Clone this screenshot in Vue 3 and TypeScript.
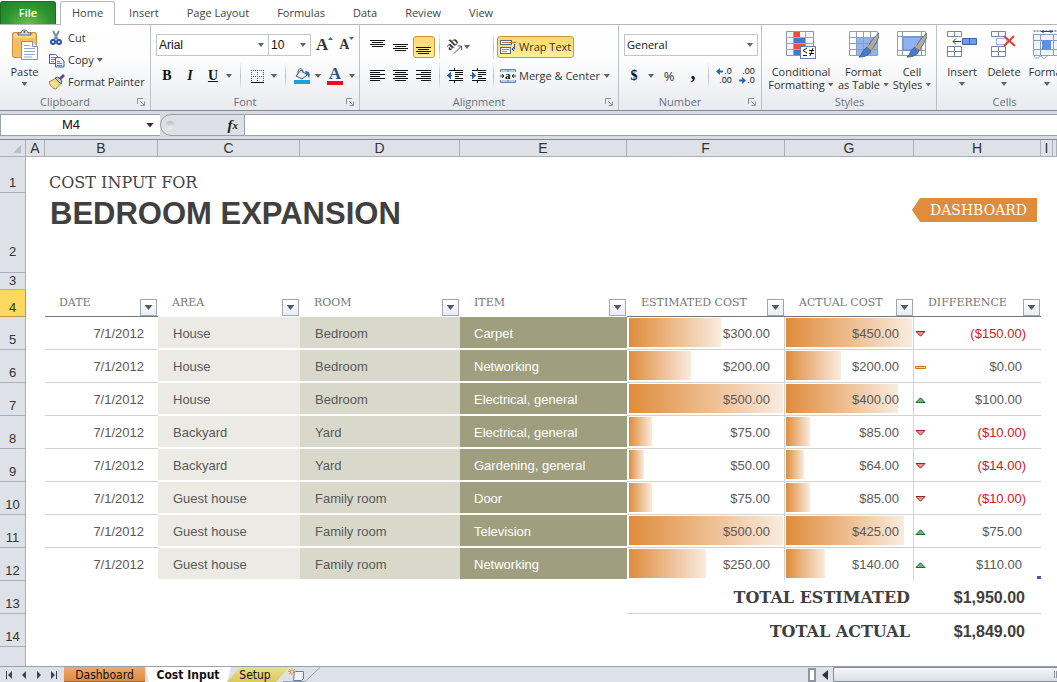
<script setup lang="ts">
import { ref } from 'vue'

interface CostRow {
  area: string
  room: string
  item: string
  estimated: number
  actual: number
}

const ribbonTabs = ['Home', 'Insert', 'Page Layout', 'Formulas', 'Data', 'Review', 'View']
const activeTab = ref('Home')

const columns = ['A', 'B', 'C', 'D', 'E', 'F', 'G', 'H', 'I', '']
const headings = [
  { key: 'date', label: 'DATE', ruled: true },
  { key: 'area', label: 'AREA', ruled: false },
  { key: 'room', label: 'ROOM', ruled: false },
  { key: 'item', label: 'ITEM', ruled: false },
  { key: 'estimated', label: 'ESTIMATED COST', ruled: true },
  { key: 'actual', label: 'ACTUAL COST', ruled: true },
  { key: 'difference', label: 'DIFFERENCE', ruled: true },
]

const rows: CostRow[] = [
  { area: 'House', room: 'Bedroom', item: 'Carpet', estimated: 300, actual: 450 },
  { area: 'House', room: 'Bedroom', item: 'Networking', estimated: 200, actual: 200 },
  { area: 'House', room: 'Bedroom', item: 'Electrical, general', estimated: 500, actual: 400 },
  { area: 'Backyard', room: 'Yard', item: 'Electrical, general', estimated: 75, actual: 85 },
  { area: 'Backyard', room: 'Yard', item: 'Gardening, general', estimated: 50, actual: 64 },
  { area: 'Guest house', room: 'Family room', item: 'Door', estimated: 75, actual: 85 },
  { area: 'Guest house', room: 'Family room', item: 'Television', estimated: 500, actual: 425 },
  { area: 'Guest house', room: 'Family room', item: 'Networking', estimated: 250, actual: 140 },
]

const maxEstimated = Math.max(...rows.map((r) => r.estimated))
const maxActual = Math.max(...rows.map((r) => r.actual))
const totalEstimated = rows.reduce((sum, r) => sum + r.estimated, 0)
const totalActual = rows.reduce((sum, r) => sum + r.actual, 0)

function money(value: number): string {
  const text = '$' + Math.abs(value).toLocaleString('en-US', { minimumFractionDigits: 2 })
  return value < 0 ? `(${text})` : text
}

function barWidth(value: number, max: number): string {
  return `${Math.round((value / max) * 100)}%`
}

const fontName = ref('Arial')
const fontSize = ref('10')
const numberFormat = ref('General')
const cellName = ref('M4')
const formula = ref('')
</script>

<template>
  <div class="excel">
    <nav class="tabs" aria-label="Ribbon tabs">
      <button type="button" class="file">File</button>
      <button
        v-for="tab in ribbonTabs"
        :key="tab"
        type="button"
        class="tab"
        :class="{ active: tab === activeTab }"
        @click="activeTab = tab"
      >{{ tab }}</button>
    </nav>

    <div class="ribbon">
      <section class="group clipboard">
        <div class="content">
          <button type="button" class="big paste">
            <svg width="30" height="32" viewBox="0 0 30 32">
              <rect x="2.5" y="3.5" width="24" height="25" rx="2" fill="#f2bf62" stroke="#c98f3a" />
              <rect x="4" y="5" width="21" height="4" fill="#f8d48d" />
              <path d="M8 6h13v-2h-3c0-4-7-4-7 0h-3z" fill="#d5d8dc" stroke="#686d74" />
              <circle cx="14.500" cy="3" r="1" fill="#555" />
              <path d="M11.500 12.500h11l5 5v13h-16z" fill="#fff" stroke="#7f93b5" />
              <path d="M22.500 12.500v5h5" fill="#dfe8f5" stroke="#7f93b5" />
              <path d="M14 16.500h6M14 19.500h11M14 22.500h11M14 25.500h11M14 28h8" stroke="#90a9cf" />
            </svg>
            <span>Paste</span>
            <i class="caret"></i>
          </button>
          <div class="stack">
            <button type="button">
              <svg width="16" height="16" viewBox="0 0 16 16" fill="none">
                <path d="M4 1l5 9M10 1l-5 9" stroke="#7b8da8" stroke-width="2" />
                <circle cx="4" cy="12" r="2" stroke="#2a56a5" stroke-width="2" />
                <circle cx="10" cy="12" r="2" stroke="#2a56a5" stroke-width="2" />
              </svg>
              Cut
            </button>
            <button type="button">
              <svg width="16" height="16" viewBox="0 0 16 16">
                <path d="M.5 2.500h6l3 3v6h-9z" fill="#fff" stroke="#3c65a6" />
                <path d="M2 5.500h4M2 7.500h4M2 9.500h3" stroke="#5b86c8" />
                <path d="M6.500 5.500h5l3.500 3.500v6h-8.500z" fill="#e8f1fc" stroke="#3c65a6" />
                <path d="M8 9.500h3M8 11.500h5M8 13.500h5" stroke="#5b86c8" />
              </svg>
              Copy <i class="caret"></i>
            </button>
            <button type="button">
              <svg width="16" height="16" viewBox="0 0 16 16">
                <path d="M0 8l7-4 5 5-5 6c-3 0-6-3-7-7z" fill="#f0d878" stroke="#a78a35" />
                <path d="M3 8l5 4M2 9l5 5" stroke="#fff5c5" />
                <path d="M6 4l3-1 4 4-1 3z" fill="#c2c8e0" stroke="#54577e" />
                <path d="M10 4l4-4 2 2-4 4z" fill="#5a4a78" />
              </svg>
              Format Painter
            </button>
          </div>
        </div>
        <h2>Clipboard</h2>
        <button type="button" class="launcher" aria-label="Clipboard options"><svg width="8" height="8" viewBox="0 0 8 8" fill="none" stroke="#8a919c"><path d="M.5 6V.5H6M3 3l4 4M7.500 3.500v4h-4" /></svg></button>
      </section>

      <section class="group font">
        <div class="content rows">
          <div class="line">
            <span class="pick family">
              <select v-model="fontName" aria-label="Font"><option>Arial</option></select>
              <i class="caret"></i>
            </span>
            <span class="pick size">
              <select v-model="fontSize" aria-label="Font size"><option>10</option></select>
              <i class="caret"></i>
            </span>
            <button type="button" class="grow-a" aria-label="Grow font">A<svg width="5" height="3" viewBox="0 0 5 3"><path d="M0 3L2.500 0L5 3z" fill="#3465b4" /></svg></button>
            <button type="button" class="shrink-a" aria-label="Shrink font">A<svg width="5" height="3" viewBox="0 0 5 3"><path d="M0 0h5L2.500 3z" fill="#3465b4" /></svg></button>
          </div>
          <div class="line font-tools">
            <button type="button" class="glyph bold">B</button>
            <button type="button" class="glyph italic">I</button>
            <button type="button" class="glyph under">U</button>
            <i class="caret"></i>
            <i class="divider"></i>
            <button type="button" aria-label="Borders">
              <svg width="13" height="13" viewBox="0 0 13 13" fill="none" stroke="#555" shape-rendering="crispEdges"><path d="M0 .5h13M0 6.500h13M.5 0v13M6.500 0v13M12.500 0v13" stroke-dasharray="1 1" /><path d="M0 12.500h13" stroke="#111" /></svg>
            </button>
            <i class="caret"></i>
            <i class="divider"></i>
            <button type="button" aria-label="Fill color">
              <svg width="17" height="16" viewBox="0 0 17 16">
                <path d="M7 2l6 5-5 4-6-3z" fill="#e9eef5" stroke="#47556c" />
                <path d="M4 5c0-6 5-6 5 0" fill="none" stroke="#47556c" />
                <path d="M11 3c6 0 5 4 4 8-1-3-1-4-3-4z" fill="#386db5" />
                <rect x="0" y="12" width="16" height="4" fill="#16a6dd" />
              </svg>
            </button>
            <i class="caret"></i>
            <button type="button" class="font-color" aria-label="Font color"><span>A</span></button>
            <i class="caret"></i>
          </div>
        </div>
        <h2>Font</h2>
        <button type="button" class="launcher" aria-label="Font options"><svg width="8" height="8" viewBox="0 0 8 8" fill="none" stroke="#8a919c"><path d="M.5 6V.5H6M3 3l4 4M7.500 3.500v4h-4" /></svg></button>
      </section>

      <section class="group alignment">
        <div class="content rows">
          <div class="line align-tools">
            <button type="button" aria-label="Top align"><svg class="lines" width="15" height="14" viewBox="0 0 15 14"><path d="M0 .5h15M2 2.500h11M0 4.500h15M2 6.500h11" /></svg></button>
            <button type="button" aria-label="Middle align"><svg class="lines" width="15" height="14" viewBox="0 0 15 14"><path d="M0 4.500h15M2 6.500h11M0 8.500h15M2 10.500h11" /></svg></button>
            <button type="button" class="lit" aria-label="Bottom align"><svg class="lines" width="15" height="14" viewBox="0 0 15 14"><path d="M0 7.500h15M2 9.500h11M0 11.500h15M2 13.500h11" /></svg></button>
            <i class="divider"></i>
            <button type="button" class="orient" aria-label="Orientation">
              <svg width="16" height="16" viewBox="0 0 16 16">
                <text x="3" y="12" transform="rotate(-45 3 12)" font-family="Liberation Serif, serif" font-weight="bold" font-size="12" fill="#333">ab</text>
                <path d="M7 14.500L14.500 7M14.500 11V7H11" fill="none" stroke="#555" />
              </svg>
              <i class="caret"></i>
            </button>
            <i class="divider"></i>
            <button type="button" class="wide lit">
              <svg width="16" height="16" viewBox="0 0 16 16" fill="none">
                <rect x=".5" y="1.500" width="11" height="4" fill="#fff" stroke="#56698a" />
                <path d="M2 3.500h14" stroke="#b0703a" />
                <rect x=".5" y="8.500" width="10" height="6" fill="#fff" stroke="#56698a" />
                <path d="M2 10.500h7M2 12.500h5" stroke="#7b92b8" />
                <path d="M14.500 5v5h-2M14 8l-2 2 2 2" stroke="#2f5ca8" />
              </svg>
              Wrap Text
            </button>
          </div>
          <div class="line align-tools">
            <button type="button" aria-label="Align left"><svg class="lines" width="15" height="12" viewBox="0 0 15 12"><path d="M0 .5h15M0 2.500h10M0 4.500h15M0 6.500h10M0 8.500h15M0 10.500h10" /></svg></button>
            <button type="button" aria-label="Center"><svg class="lines" width="15" height="12" viewBox="0 0 15 12"><path d="M0 .5h15M2 2.500h11M0 4.500h15M2 6.500h11M0 8.500h15M2 10.500h11" /></svg></button>
            <button type="button" aria-label="Align right"><svg class="lines" width="15" height="12" viewBox="0 0 15 12"><path d="M0 .5h15M5 2.500h10M0 4.500h15M5 6.500h10M0 8.500h15M5 10.500h10" /></svg></button>
            <i class="divider"></i>
            <button type="button" aria-label="Decrease indent">
              <svg class="lines" width="16" height="16" viewBox="0 0 16 16"><path d="M2 2.500h14M8 4.500h8M8 6.500h8M8 8.500h4M8 10.500h8M2 12.500h14M7.500 0v2M7.500 13v2" /><path d="M5 7.500H1" stroke="#2f62b5" /><path d="M4 4v7L0 7.500z" fill="#2f62b5" stroke="none" /></svg>
            </button>
            <button type="button" aria-label="Increase indent">
              <svg class="lines" width="16" height="16" viewBox="0 0 16 16"><path d="M2 2.500h14M8 4.500h8M8 6.500h8M8 8.500h4M8 10.500h8M2 12.500h14M7.500 0v2M7.500 13v2" /><path d="M0 7.500h4" stroke="#2f62b5" /><path d="M2 4v7l4-3.500z" fill="#2f62b5" stroke="none" /></svg>
            </button>
            <i class="divider"></i>
            <button type="button" class="wide">
              <svg width="16" height="16" viewBox="0 0 16 16">
                <path d="M.5 1.500h15v13H.5zM8 1.500v3M8 11.500v3" fill="#b9cfee" stroke="#6480ae" />
                <rect x="0" y="4" width="16" height="8" fill="#f1f6fd" />
                <text x="5" y="11" font-family="Liberation Serif, serif" font-weight="bold" font-size="11" fill="#111">a</text>
                <path d="M0 8h4M2 6l2 2-2 2M16 8h-4M14 6l-2 2 2 2" fill="none" stroke="#222" />
              </svg>
              Merge &amp; Center <i class="caret"></i>
            </button>
          </div>
        </div>
        <h2>Alignment</h2>
        <button type="button" class="launcher" aria-label="Alignment options"><svg width="8" height="8" viewBox="0 0 8 8" fill="none" stroke="#8a919c"><path d="M.5 6V.5H6M3 3l4 4M7.500 3.500v4h-4" /></svg></button>
      </section>

      <section class="group number">
        <div class="content rows">
          <div class="line">
            <span class="pick format">
              <select v-model="numberFormat" aria-label="Number format"><option>General</option></select>
              <i class="caret"></i>
            </span>
          </div>
          <div class="line number-tools">
            <button type="button" class="glyph">$</button>
            <i class="caret"></i>
            <button type="button" class="percent">%</button>
            <button type="button" class="glyph comma">,</button>
            <i class="divider"></i>
            <button type="button" class="decimals" aria-label="Increase decimal">
              <span><svg width="7" height="7" viewBox="0 0 7 7"><path d="M0 3.500L4 0v2.500h3v2H4V7z" fill="#2f62b5" /></svg>.0</span>
              <span>.00</span>
            </button>
            <button type="button" class="decimals" aria-label="Decrease decimal">
              <span>.00</span>
              <span><svg width="7" height="7" viewBox="0 0 7 7"><path d="M7 3.500L3 0v2.500H0v2h3V7z" fill="#2f62b5" /></svg>.0</span>
            </button>
          </div>
        </div>
        <h2>Number</h2>
        <button type="button" class="launcher" aria-label="Number options"><svg width="8" height="8" viewBox="0 0 8 8" fill="none" stroke="#8a919c"><path d="M.5 6V.5H6M3 3l4 4M7.500 3.500v4h-4" /></svg></button>
      </section>

      <section class="group styles">
        <div class="content tiles">
          <button type="button" class="big">
            <svg width="30" height="30" viewBox="0 0 30 30">
              <path d="M.5 1.500h27v24H.5z" fill="#f4f8fd" stroke="#8296b5" />
              <path d="M.5 7.500h27M.5 13.500h27M.5 19.500h27M7.500 1.500v24M19.500 1.500v24" stroke="#9aabc6" fill="none" />
              <rect x="8" y="2" width="6" height="5" fill="#e8503c" />
              <rect x="8" y="8" width="11" height="5" fill="#4377d6" />
              <rect x="8" y="14" width="11" height="5" fill="#e8503c" />
              <rect x="8" y="20" width="6" height="5" fill="#4377d6" />
              <rect x="14.500" y="16.500" width="15" height="12" fill="#fff" stroke="#6a7f9e" />
              <path d="M21 18l-4 2.500 4 2.500M17 25.500h4M23 20.500h5M23 23.500h5M27 18l-3 8" fill="none" stroke="#111" />
            </svg>
            <span>Conditional</span><span>Formatting <i class="caret"></i></span>
          </button>
          <button type="button" class="big">
            <svg width="30" height="30" viewBox="0 0 30 30">
              <path d="M.5 1.500h28v24H.5z" fill="#fff" stroke="#8ba0c0" />
              <path d="M8 8h20v17H8z" fill="#8fb5ef" />
              <path d="M.5 7.500h28M.5 13.500h28M.5 19.500h28M7.500 1.500v24M14.500 1.500v24M21.500 1.500v24" stroke="#8ba0c0" fill="none" />
              <path d="M30 3c-4 3-9 9-11 14l4 2c4-5 6-10 7-13z" fill="#a9adb3" stroke="#63676e" />
              <path d="M19 17l3 3c-1 5-6 7-12 7 4-3 3-8 9-10z" fill="#4a7cc4" stroke="#3e5f8f" />
              <path d="M18 17l2-2 4 3-2 2z" fill="#e6a04c" />
            </svg>
            <span>Format</span><span>as Table <i class="caret"></i></span>
          </button>
          <button type="button" class="big">
            <svg width="30" height="30" viewBox="0 0 30 30">
              <path d="M.5 1.500h28v24H.5z" fill="#fff" stroke="#8ba0c0" />
              <path d="M.5 6.500h28M.5 20.500h28M5.500 1.500v24M24.500 1.500v24" stroke="#8ba0c0" fill="none" />
              <path d="M6 7h18v13H6z" fill="#8db4f2" stroke="#5f8bd0" />
              <path d="M30 3c-4 3-9 9-11 14l4 2c4-5 6-10 7-13z" fill="#a9adb3" stroke="#63676e" />
              <path d="M19 17l3 3c-1 5-6 7-12 7 4-3 3-8 9-10z" fill="#4a7cc4" stroke="#3e5f8f" />
              <path d="M18 17l2-2 4 3-2 2z" fill="#e6a04c" />
            </svg>
            <span>Cell</span><span>Styles <i class="caret"></i></span>
          </button>
        </div>
        <h2>Styles</h2>
      </section>

      <section class="group cells">
        <div class="content tiles">
          <button type="button" class="big">
            <svg width="30" height="30" viewBox="0 0 30 30">
              <path d="M.5 1.500h14v5h-14zM7.500 1.500v5M.5 16.500h14v10h-14zM7.500 16.500v10M.5 21.500h14" fill="#fff" stroke="#76869f" />
              <path d="M15.500 8.500h14v6h-14zM22.500 8.500v6" fill="#6c9cec" stroke="#3c62a8" />
              <path d="M6 11.500h8M9 8.500l-3 3 3 3" fill="none" stroke="#333f52" />
            </svg>
            <span>Insert</span><i class="caret"></i>
          </button>
          <button type="button" class="big">
            <svg width="26" height="30" viewBox="0 0 26 30">
              <path d="M.5 1.500h14v5h-14zM7.500 1.500v5M.5 16.500h14v10h-14zM7.500 16.500v10M.5 21.500h14" fill="#fff" stroke="#76869f" />
              <path d="M5.500 8.500h10v6h-10z" fill="none" stroke="#3c62a8" stroke-dasharray="1 1" />
              <path d="M13 6l11 10M23 6L13 16" stroke="#e5402a" stroke-width="2" />
            </svg>
            <span>Delete</span><i class="caret"></i>
          </button>
          <button type="button" class="big">
            <svg width="30" height="30" viewBox="0 0 30 30">
              <path d="M1.500 1h27" stroke="#33496b" stroke-dasharray="2 1" />
              <path d="M9 1.500h12M11 0v3M19 0v3" stroke="#33496b" />
              <path d="M1.500 4.500h27v21h-27z" fill="#eef4fc" stroke="#8ba0c0" />
              <path d="M8.500 4.500v21M21.500 4.500v21M1.500 10.500h27M1.500 19.500h27" fill="none" stroke="#8ba0c0" />
              <rect x="10" y="10" width="9" height="10" fill="#5d90e6" />
              <path d="M2 26c1 3 5 3 6 0M9 26c1 3 5 3 6 0" fill="#fff" stroke="#8ba0c0" />
            </svg>
            <span>Format</span><i class="caret"></i>
          </button>
        </div>
        <h2>Cells</h2>
      </section>
    </div>

    <div class="formula-bar">
      <div class="name-box">
        <input v-model="cellName" type="text" aria-label="Name box" />
        <i class="caret dark"></i>
      </div>
      <div class="fx-zone">
        <i class="knob"></i>
        <button type="button" class="fx" aria-label="Insert function">f<sub>x</sub></button>
      </div>
      <input v-model="formula" class="formula" type="text" aria-label="Formula" />
    </div>

    <main class="sheet">
      <table>
        <colgroup>
          <col class="c-head" />
          <col v-for="(c, i) in columns" :key="i" :class="'c-' + (c || 'rest').toLowerCase()" />
        </colgroup>
        <thead>
          <tr>
            <th class="corner"><svg width="8" height="8" viewBox="0 0 8 8"><path d="M8 0v8H0z" fill="#b9bec6" /></svg></th>
            <th v-for="(c, i) in columns" :key="i" scope="col">{{ c }}</th>
          </tr>
        </thead>
        <tbody>
          <tr class="r-intro">
            <th scope="row">1</th>
            <td></td>
            <td colspan="9" class="intro">COST INPUT FOR</td>
          </tr>
          <tr class="r-title">
            <th scope="row">2</th>
            <td></td>
            <td colspan="5"><h1>BEDROOM EXPANSION</h1></td>
            <td colspan="2" class="link-cell"><a href="#dashboard" class="dash-link">DASHBOARD</a></td>
            <td colspan="2"></td>
          </tr>
          <tr class="r-gap">
            <th scope="row">3</th>
            <td colspan="10"></td>
          </tr>
          <tr class="r-head">
            <th scope="row" class="current">4</th>
            <td></td>
            <td v-for="head in headings" :key="head.key" :class="{ ruled: head.ruled }">
              <div class="head">
                <span>{{ head.label }}</span>
                <button type="button" class="filter" :aria-label="'Filter ' + head.label"><i class="caret"></i></button>
              </div>
            </td>
            <td colspan="2"></td>
          </tr>
          <tr v-for="(row, i) in rows" :key="i" class="r-data" :class="{ last: i === rows.length - 1 }">
            <th scope="row">{{ i + 5 }}</th>
            <td></td>
            <td class="date">7/1/2012</td>
            <td class="area">{{ row.area }}</td>
            <td class="room">{{ row.room }}</td>
            <td class="item">{{ row.item }}</td>
            <td class="cost">
              <div class="meter estimated">
                <span class="bar" :style="{ width: barWidth(row.estimated, maxEstimated) }"></span>
                <span class="amount">{{ money(row.estimated) }}</span>
              </div>
            </td>
            <td class="cost">
              <div class="meter">
                <span class="bar" :style="{ width: barWidth(row.actual, maxActual) }"></span>
                <span class="amount">{{ money(row.actual) }}</span>
              </div>
            </td>
            <td class="diff" :class="{ negative: row.estimated < row.actual }">
              <div class="trend">
                <svg v-if="row.estimated < row.actual" width="11" height="6" viewBox="0 0 11 6"><path d="M1 .5h9L5.500 5.200z" fill="#f58e88" stroke="#8f2a26" /></svg>
                <svg v-else-if="row.estimated > row.actual" width="11" height="6" viewBox="0 0 11 6"><path d="M1 5.500h9L5.500 .8z" fill="#5fc178" stroke="#1f6a32" /></svg>
                <svg v-else width="11" height="6" viewBox="0 0 11 6"><path d="M.5 2.500h10v2H.5z" fill="#fbd27c" stroke="#c47d15" /></svg>
                <span>{{ money(row.estimated - row.actual) }}</span>
              </div>
            </td>
            <td colspan="2"></td>
          </tr>
          <tr class="r-total ruled-row">
            <th scope="row">13</th>
            <td colspan="5"></td>
            <td colspan="2" class="total-label">TOTAL ESTIMATED</td>
            <td class="total">{{ money(totalEstimated) }}</td>
            <td colspan="2"></td>
          </tr>
          <tr class="r-total">
            <th scope="row">14</th>
            <td colspan="5"></td>
            <td colspan="2" class="total-label">TOTAL ACTUAL</td>
            <td class="total">{{ money(totalActual) }}</td>
            <td colspan="2"></td>
          </tr>
          <tr class="r-rest">
            <th scope="row"></th>
            <td colspan="10"></td>
          </tr>
        </tbody>
      </table>
    </main>

    <footer class="sheet-bar">
      <div class="arrows">
        <button type="button" aria-label="First sheet"><svg width="8" height="8" viewBox="0 0 8 8"><path d="M1 0h1v8H1zM7 0v8L3 4z" /></svg></button>
        <button type="button" aria-label="Previous sheet"><svg width="8" height="8" viewBox="0 0 8 8"><path d="M6 0v8L2 4z" /></svg></button>
        <button type="button" aria-label="Next sheet"><svg width="8" height="8" viewBox="0 0 8 8"><path d="M2 0v8l4-4z" /></svg></button>
        <button type="button" aria-label="Last sheet"><svg width="8" height="8" viewBox="0 0 8 8"><path d="M6 0h1v8H6zM1 0v8l4-4z" /></svg></button>
      </div>
      <button type="button" class="sheet-tab dashboard">Dashboard</button>
      <button type="button" class="sheet-tab current-sheet">Cost Input</button>
      <button type="button" class="sheet-tab setup">Setup</button>
      <button type="button" class="new-sheet" aria-label="Insert worksheet">
        <svg width="40" height="15" viewBox="0 0 40 15" fill="none">
          <path d="M0 14.500h22L37 .5" stroke="#9aa0aa" />
          <path d="M11.500 4.500h9v7l-2 2h-8z" fill="#f2f6fc" stroke="#5f7db0" />
          <path d="M9 1v7M5 4.500h8M6 2l6 5M12 2L6 7" stroke="#e39a35" />
          <circle cx="9" cy="4.500" r="1" fill="#fff3b0" />
        </svg>
      </button>
      <div class="scroll">
        <i class="split"></i>
        <button type="button" class="left" aria-label="Scroll left"><svg width="6" height="10" viewBox="0 0 6 10"><path d="M6 0v10L0 5z" /></svg></button>
        <div class="thumb"><i></i></div>
      </div>
    </footer>
  </div>
</template>

<style>
html, body { margin: 0; overflow: hidden; }
</style>

<style scoped>
.excel {
  display: flex;
  flex-direction: column;
  height: 100vh;
  overflow: hidden;
  background: #fff;
  color: #333;
  font: 11px/14px "Open Sans", "Noto Sans", sans-serif;
}
.excel * { box-sizing: border-box; }
button {
  display: flex;
  align-items: center;
  justify-content: center;
  margin: 0;
  padding: 0;
  border: 0;
  background: none;
  color: inherit;
  font: inherit;
  white-space: nowrap;
}
svg { flex: none; display: block; }
input, select { border: 0; outline: 0; margin: 0; background: none; color: #111; font: inherit; appearance: none; border-radius: 0; }
.caret {
  flex: none;
  display: inline-block;
  width: 6px;
  height: 4px;
  background: #5f636a;
  clip-path: polygon(0 0, 100% 0, 50% 100%);
}

/* Ribbon tabs */
.tabs { display: flex; flex: none; height: 25px; padding-top: 1px; border-bottom: 1px solid #b4b8be; }
.file {
  width: 56px;
  margin-right: 4px;
  border: 1px solid #1e6b24;
  border-bottom: 0;
  border-radius: 3px 3px 0 0;
  background: radial-gradient(ellipse at 50% 100%, #6cc04c 0%, #2f9632 55%, #1f7f2b 100%);
  color: #fff;
  font-weight: 600;
}
.tab { padding: 0 13px; border: 1px solid transparent; border-bottom: 0; color: #444; }
.tab.active { margin-bottom: -1px; padding: 0 11px 1px; border-color: #b4b8be; border-radius: 3px 3px 0 0; background: #fff; }

/* Ribbon groups */
.ribbon {
  display: flex;
  flex: none;
  height: 86px;
  overflow: hidden;
  border-bottom: 1px solid #85888f;
  background: linear-gradient(#fff 0%, #fdfdfe 40%, #e8ebef 100%);
}
.group {
  display: grid;
  flex: none;
  grid-template-rows: 69px 16px;
  grid-template-columns: 1fr;
  border-right: 1px solid #bcc0c7;
}
.clipboard { width: 151px; }
.font { width: 209px; }
.alignment { width: 259px; }
.number { width: 143px; }
.styles { width: 175px; }
.cells { width: 136px; }
.group h2 { grid-area: 2 / 1; margin: 0; padding-right: 20px; color: #69707d; font: inherit; line-height: 16px; text-align: center; }
.styles h2, .cells h2 { padding: 0; }
.launcher { grid-area: 2 / 1; justify-self: end; align-self: center; width: 18px; height: 14px; }
.content { display: flex; grid-area: 1 / 1; }
.rows { flex-direction: column; gap: 7px; padding: 9px 0 0 5px; }
.line { display: flex; height: 22px; align-items: center; }
.divider { width: 1px; height: 26px; background: linear-gradient(#eef0f3, #b9bdc5, #eef0f3); justify-self: center; }

.big { flex-direction: column; justify-content: flex-start; line-height: 13px; padding-top: 5px; }
.big svg { margin-bottom: 5px; }
.big > .caret { margin-top: 4px; }
.big span { display: flex; align-items: center; gap: 3px; }
.paste { width: 49px; padding-top: 4px; }
.paste svg { margin-bottom: 4px; }
.stack { display: flex; flex-direction: column; padding-top: 2px; }
.stack button { justify-content: flex-start; height: 22px; gap: 3px; }
.tiles > button { flex: none; }
.styles .tiles { display: grid; grid-template-columns: 78px 47px 50px; }
.cells .tiles { display: grid; grid-template-columns: 42px 42px 44px; padding-left: 4px; }

.pick { display: grid; height: 22px; align-items: center; border: 1px solid #c3c6cb; background: #fff; }
.pick select { grid-area: 1 / 1; width: 100%; height: 20px; padding: 0 2px; font-size: 12px; }
.pick .caret { grid-area: 1 / 1; justify-self: end; margin-right: 4px; pointer-events: none; }
.family { width: 113px; }
.family select, .size select { font-family: "Liberation Sans", Arial, sans-serif; }
.size { width: 43px; margin-left: -1px; }
.format { width: 134px; }
.format select { font-size: 11px; }
.grow-a, .shrink-a { align-items: flex-start; font: bold 17px/22px "Liberation Serif", serif; }
.grow-a { margin-left: 5px; }
.shrink-a { margin-left: 6px; font-size: 14px; }
.grow-a svg, .shrink-a svg { margin-top: 3px; }

.font-tools { display: grid; grid-template-columns: 22px 24px 22px 10px 12px 22px 12px 10px 24px 8px 26px 8px; justify-items: center; }
.glyph { color: #111; font: bold 14px/20px "Liberation Serif", serif; }
.italic { font-style: italic; }
.under { text-decoration: underline; }
.font-color span { width: 16px; height: 17px; border-bottom: 4px solid #e01212; color: #274f92; font: bold 17px/12px "Liberation Serif", serif; text-align: center; }

.align-tools { display: grid; grid-template-columns: 23px 23px 23px 8px 24px 22px 8px 1fr; padding-left: 1px; justify-items: center; }
.lines { fill: none; stroke: #111; shape-rendering: crispEdges; }
.lit { border: 1px solid #c39a3c; border-radius: 3px; background: linear-gradient(#fbd774, #ffe27f 50%, #fff09b); }
.align-tools > .lit:not(.wide) { width: 22px; height: 22px; }
.orient { grid-column: span 2; justify-self: start; margin-left: 4px; gap: 1px; }
.wide { justify-self: start; height: 22px; padding: 0 2px; gap: 3px; border: 1px solid transparent; }
.wide.lit { border-color: #c39a3c; }
.wide .caret { margin-left: 1px; }

.number-tools { display: grid; grid-template-columns: 20px 14px 22px 26px 4px 28px 18px; justify-items: center; }
.percent { font-size: 13px; }
.comma { font-size: 20px; line-height: 10px; padding-bottom: 8px; }
.decimals { flex-direction: column; align-items: flex-end; color: #222; font: 9px/9px "Liberation Sans", Arial, sans-serif; }
.decimals span { display: flex; align-items: center; gap: 1px; }

/* Formula bar */
.formula-bar {
  display: flex;
  flex: none;
  height: 29px;
  padding: 3px 0 4px;
  border-bottom: 1px solid #85888f;
  background: #d8dce2;
}
.name-box, .fx-zone, .formula { height: 22px; border: solid #9a9fa8; border-width: 1px 0; background: #fff; }
.name-box { display: flex; align-items: center; width: 160px; border-left-width: 1px; }
.name-box input { width: 140px; text-align: center; font: 13px/18px "Liberation Sans", Arial, sans-serif; }
.caret.dark { width: 8px; height: 5px; margin-left: 5px; background: #333; }
.fx-zone { display: flex; align-items: center; justify-content: space-between; width: 85px; padding: 0 6px 0 5px; border-width: 1px; border-radius: 11px 0 0 11px; background: #dde1e7; }
.knob { width: 8px; height: 8px; border-radius: 50%; background: linear-gradient(#b6bbc3, #f3f4f6); }
.fx { color: #222; font: italic bold 15px/16px "Liberation Serif", serif; }
.fx sub { font-size: 11px; line-height: 8px; }
.formula { flex: 1; min-width: 0; padding: 0 4px; }

/* Worksheet */
.sheet { flex: 1; min-height: 0; overflow: hidden; }
table { width: 100%; table-layout: fixed; border-collapse: separate; border-spacing: 0; color: #595959; font: 13px/16px "Liberation Sans", Arial, sans-serif; }
td { padding: 0; }
th { padding: 0; background: #dee1e7; color: #333; font-weight: 400; font-size: 13px; line-height: 16px; border: solid #a9aeb7; border-width: 0 1px 1px 0; }
thead th { height: 17px; font-size: 14px; }
tbody th { vertical-align: bottom; }
.corner svg { margin: 2px 4px 0 auto; }
.c-head { width: 26px; }
.c-a { width: 19px; }
.c-b { width: 113px; }
.c-c { width: 142px; }
.c-d { width: 160px; }
.c-e { width: 167px; }
.c-f { width: 158px; }
.c-g { width: 129px; }
.c-h { width: 127px; }
.c-i { width: 12px; }
.r-intro > * { height: 36px; }
.r-title > * { height: 80px; }
.r-title th { padding-bottom: 12px; }
.r-gap > * { height: 17px; }
.r-head > * { height: 27px; }
.r-data > *, .r-total > * { height: 33px; }
.r-rest > * { height: 33px; }
.r-data th, .r-total th, .r-intro th { padding-bottom: 1px; }
.intro { padding-left: 4px; vertical-align: bottom; color: #444; font: 16px/20px "DejaVu Serif", serif; }
.r-title td { vertical-align: top; padding-top: 4px; }
h1 { margin: 0; padding-left: 5px; color: #404040; font: bold 31px/34px "Liberation Sans", Arial, sans-serif; }
.link-cell { text-align: right; }
.dash-link {
  display: block;
  width: 125px;
  margin: 1px 4px 0 auto;
  padding-left: 8px;
  background: #df8c3d;
  clip-path: polygon(0 50%, 8px 0, 100% 0, 100% 100%, 8px 100%);
  color: #fff;
  font: 14px/24px "DejaVu Serif", serif;
  text-align: center;
  text-decoration: none;
}
.current { background: #ffd862; border-color: #c09a3a; }
.r-head td { vertical-align: top; }
.head { display: flex; justify-content: space-between; height: 26px; padding-left: 14px; color: #777; font: 11px/26px "DejaVu Serif", serif; white-space: nowrap; }
.filter { align-self: flex-end; width: 17px; height: 17px; margin-right: 1px; border: 1px solid #a2a8b3; background: linear-gradient(#fff, #e9ecf3); }
.filter .caret { width: 8px; height: 5px; background: #555a63; }
.ruled { border-bottom: 1px solid #777; }
.date, .cost, .diff { border-bottom: 1px solid #d2d2d2; }
.date { padding: 2px 14px 0 0; text-align: right; }
.area, .room, .item { padding: 3px 0 0 15px; border-bottom: 2px solid #fff; background-clip: padding-box; }
.item { padding-left: 14px; }
.area { background-color: #ebeae5; }
.room { background-color: #d8d8cb; }
.item { background-color: #9f9f7f; color: #fff; }
.cost { border-right: 1px solid #d2d2d2; }
.meter { display: grid; height: 32px; padding: 1px 1px 2px; }
.meter.estimated { padding-left: 2px; }
.bar { grid-area: 1 / 1; background: linear-gradient(90deg, #df8c3b, #faebdf); }
.amount { grid-area: 1 / 1; justify-self: end; align-self: center; padding: 2px 13px 0 0; }
.trend { display: flex; align-items: center; justify-content: space-between; height: 32px; padding: 2px 19px 0 1px; }
.negative .trend { padding-right: 15px; }
.negative span { color: #d01818; }
.last .date, .last .cost, .last .diff { border-bottom-color: #fff; }
.last .diff { background: linear-gradient(#4a55a8, #4a55a8) right 0 bottom 1px / 4px 3px no-repeat; }
.total-label { padding: 2px 4px 0 0; color: #404040; font: bold 16px/20px "DejaVu Serif", serif; text-align: right; }
.total { padding: 2px 16px 0 0; color: #404040; font-size: 16px; font-weight: 700; text-align: right; }
.ruled-row .total-label, .ruled-row .total { border-bottom: 1px solid #d2d2d2; }

/* Sheet tabs */
.sheet-bar { display: flex; flex: none; height: 16px; background: #dde1e8; border-top: 1px solid #9ba1ab; color: #111; font: 12px/14px "DejaVu Sans Condensed", "DejaVu Sans", sans-serif; }
.arrows { display: flex; align-items: center; gap: 7px; width: 64px; padding-left: 5px; fill: #3c4452; }
.sheet-tab { height: 15px; padding-top: 1px; }
.dashboard { width: 81px; background: linear-gradient(#f0a869, #dd8b41); border-bottom: 1px solid #a5683a; }
.current-sheet { width: 86px; background: #fff; font-weight: 700; clip-path: polygon(0 0, 100% 0, 82px 100%, 4px 100%); }
.setup { width: 62px; margin-left: -4px; background: linear-gradient(#eede8a, #dbc75f); clip-path: polygon(13px 0, 100% 0, 49px 100%, 0 100%); padding-right: 6px; }
.new-sheet { width: 40px; margin-left: -6px; }
.scroll { display: flex; align-items: center; width: 249px; margin-left: auto; }
.split { width: 8px; height: 14px; border: 2px solid #8f95a0; background: #fff; }
.left { width: 17px; height: 14px; fill: #333; }
.thumb { display: flex; flex: 1; height: 15px; align-items: center; justify-content: flex-end; border: solid #868c97; border-width: 1px 0 1px 1px; border-radius: 2px 0 0 2px; background: linear-gradient(#f5f7f9, #dadee5); }
.thumb i { width: 3px; height: 7px; border: solid #8f95a0; border-width: 0 1px; }
</style>
